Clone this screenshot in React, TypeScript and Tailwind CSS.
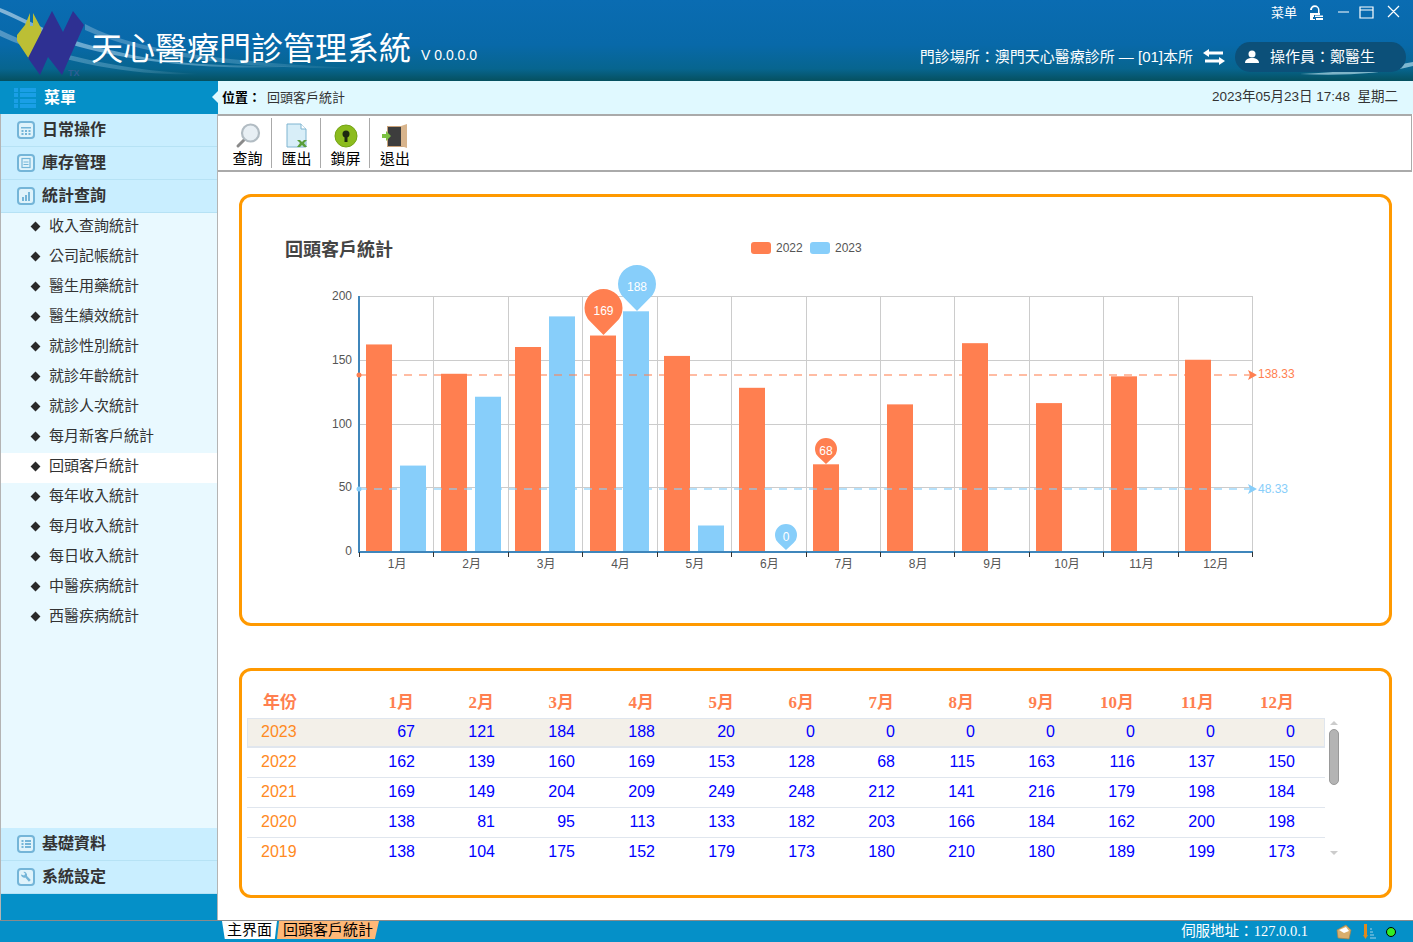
import type { ReactNode } from "react";

const months = ["1月", "2月", "3月", "4月", "5月", "6月", "7月", "8月", "9月", "10月", "11月", "12月"];
const rows: [string, number[]][] = [
  ["2023", [67, 121, 184, 188, 20, 0, 0, 0, 0, 0, 0, 0]],
  ["2022", [162, 139, 160, 169, 153, 128, 68, 115, 163, 116, 137, 150]],
  ["2021", [169, 149, 204, 209, 249, 248, 212, 141, 216, 179, 198, 184]],
  ["2020", [138, 81, 95, 113, 133, 182, 203, 166, 184, 162, 200, 198]],
  ["2019", [138, 104, 175, 152, 179, 173, 180, 210, 180, 189, 199, 173]],
];
const subMenu = ["收入查詢統計", "公司記帳統計", "醫生用藥統計", "醫生績效統計", "就診性別統計", "就診年齡統計", "就診人次統計", "每月新客戶統計", "回頭客戶統計", "每年收入統計", "每月收入統計", "每日收入統計", "中醫疾病統計", "西醫疾病統計"];

const ORANGE = "#ff7f50";
const BLUE = "#87cefa";
const X0 = 359;
const STEP = 74.42;
const Y0 = 551;
const yOf = (v: number) => Y0 - v * 1.275;
const orangeX = [366, 441, 515, 590, 664, 739, 813, 887, 962, 1036, 1111, 1185];
const blueX = [400, 475, 549, 623, 698];

function Pin({ cx, cy, r, tip, color, label }: { cx: number; cy: number; r: number; tip: number; color: string; label: string }) {
  const d = tip - cy;
  const ty = cy + (r * r) / d;
  const tx = r * Math.sqrt(1 - (r * r) / (d * d));
  return (
    <g>
      <path d={`M${cx} ${tip}L${cx - tx} ${ty}A${r} ${r} 0 1 1 ${cx + tx} ${ty}Z`} fill={color} />
      <text x={cx} y={cy + (r > 15 ? 7 : 5.5)} textAnchor="middle" fontSize="12" fill="#fff">{label}</text>
    </g>
  );
}

function Chart() {
  return (
    <svg viewBox="242 197 1145 426" className="block w-[1145px] h-[426px]">
      <text x="285" y="256" fontSize="18" fontWeight="700" fill="#444">回頭客戶統計</text>
      <rect x="751" y="242" width="20" height="12" rx="3" fill={ORANGE} />
      <text x="776" y="252" fontSize="12" fill="#555">2022</text>
      <rect x="810" y="242" width="20" height="12" rx="3" fill={BLUE} />
      <text x="835" y="252" fontSize="12" fill="#555">2023</text>
      {[200, 150, 100, 50].map((v) => (
        <line key={v} x1={X0} x2="1252" y1={Math.round(yOf(v)) + 0.5} y2={Math.round(yOf(v)) + 0.5} stroke="#ccc" />
      ))}
      {months.map((_, i) => (
        <line key={i} x1={Math.round(X0 + STEP * (i + 1)) + 0.5} x2={Math.round(X0 + STEP * (i + 1)) + 0.5} y1="296" y2={Y0} stroke="#ccc" />
      ))}
      {[200, 150, 100, 50, 0].map((v) => (
        <text key={v} x="352" y={yOf(v) + 4} textAnchor="end" fontSize="12" fill="#555">{v}</text>
      ))}
      {months.map((m, i) => {
        const c = X0 + STEP * (i + 0.5);
        return (
          <g key={m}>
            <rect x={orangeX[i]} y={yOf(rows[1][1][i])} width="26" height={rows[1][1][i] * 1.275} fill={ORANGE} />
            {rows[0][1][i] > 0 && <rect x={blueX[i]} y={yOf(rows[0][1][i])} width="26" height={rows[0][1][i] * 1.275} fill={BLUE} />}
            <text x={c + 1} y="568" textAnchor="middle" fontSize="12" fill="#555">{m}</text>
          </g>
        );
      })}
      <line x1={X0} x2={X0} y1="296" y2="553" stroke="#3f86bb" strokeWidth="2" />
      <line x1={X0 - 1} x2="1253" y1="552" y2="552" stroke="#3f86bb" strokeWidth="2" />
      {months.concat("").map((_, i) => (
        <line key={i} x1={Math.round(X0 + STEP * i) + 0.5} x2={Math.round(X0 + STEP * i) + 0.5} y1="552" y2="557" stroke="#333" />
      ))}
      <line x1={X0} x2="1250" y1="375" y2="375" stroke={ORANGE} strokeOpacity="0.7" strokeWidth="1.5" strokeDasharray="8 7" />
      <circle cx={X0} cy="375" r="2.5" fill={ORANGE} />
      <path d="M1248 370l9 5-9 5 2-5z" fill={ORANGE} />
      <text x="1258" y="378" fontSize="12" fill={ORANGE}>138.33</text>
      <line x1={X0} x2="1250" y1="489" y2="489" stroke={BLUE} strokeOpacity="0.8" strokeWidth="1.5" strokeDasharray="8 7" />
      <circle cx={X0} cy="489" r="2.5" fill={BLUE} />
      <path d="M1248 484l9 5-9 5 2-5z" fill={BLUE} />
      <text x="1258" y="493" fontSize="12" fill={BLUE}>48.33</text>
      <Pin cx={603.5} cy={308} r={19} tip={335} color={ORANGE} label="169" />
      <Pin cx={637} cy={284} r={19} tip={311} color={BLUE} label="188" />
      <Pin cx={826} cy={449} r={11} tip={464} color={ORANGE} label="68" />
      <Pin cx={786} cy={535} r={11} tip={550} color={BLUE} label="0" />
    </svg>
  );
}

function Logo() {
  return (
    <svg width="90" height="80" viewBox="0 0 90 80" className="absolute left-0 top-0">
      <path d="M17 35l8-10 5-12v13h3V13l8 15 1 6-13 25-12-18z" fill="#bcbf35" />
      <path d="M28 58L52 11l11 21 10-21 11 14-22 50-14-18-8 18z" fill="#2e3092" />
      <text x="68" y="76" fontSize="9" fontWeight="700" fill="#2e5f96">TX</text>
    </svg>
  );
}

function Streaks() {
  return (
    <svg width="1413" height="81" viewBox="0 0 1413 81" className="absolute inset-0">
      <defs>
        <linearGradient id="st" x1="0" x2="1" y1="0" y2="0">
          <stop offset="0" stopColor="#fff" stopOpacity="0.5" />
          <stop offset="0.6" stopColor="#bfe9ff" stopOpacity="0.4" />
          <stop offset="1" stopColor="#fff" stopOpacity="0" />
        </linearGradient>
      </defs>
      <path d="M0 8C30 20 60 40 110 50C160 62 190 66 300 66C210 72 120 60 70 44C40 32 20 20 0 12Z" fill="url(#st)" />
      <path d="M0 30C40 50 110 70 200 74C150 76 70 68 0 36Z" fill="url(#st)" opacity="0.6" />
      <path d="M85 24C130 48 210 62 360 68C250 70 150 58 85 30Z" fill="url(#st)" opacity="0.5" />
      <path d="M1300 74C1340 72 1380 68 1413 62V66C1380 74 1340 76 1300 74Z" fill="#cfeefa" opacity="0.6" />
    </svg>
  );
}

function SideIcon({ children }: { children: ReactNode }) {
  return (
    <svg width="18" height="18" viewBox="0 0 18 18" className="shrink-0">
      <rect x="1" y="1" width="16" height="16" rx="3" fill="#dff3fb" stroke="#74b5d8" strokeWidth="2" />
      {children}
    </svg>
  );
}

function Section({ icon, label, border = true }: { icon: ReactNode; label: string; border?: boolean }) {
  return (
    <div className={`h-[33px] flex items-center pl-4 gap-[7px] bg-[#c9eeff] text-[16px] font-bold text-[#333] ${border ? "border-b border-[#b6e2f5]" : ""}`}>
      <SideIcon>{icon}</SideIcon>
      <span>{label}</span>
    </div>
  );
}

function ToolButton({ icon, label, last }: { icon: ReactNode; label: string; last?: boolean }) {
  return (
    <div className={`w-[49px] h-[50px] flex flex-col items-center pl-px ${last ? "" : "border-r border-[#aaa]"}`}>
      <div className="h-[32px] flex items-center pt-[3px]">{icon}</div>
      <span className="text-[15px] leading-[17px] text-black">{label}</span>
    </div>
  );
}

function Sidebar() {
  return (
    <aside className="w-[218px] flex flex-col border-l border-r border-[#b4b4b4] bg-[#e9f9ff]">
      <Section label="日常操作" icon={<g fill="#74b5d8"><rect x="4" y="6" width="10" height="1.500" /><rect x="4.500" y="9" width="2" height="2" /><rect x="8" y="9" width="2" height="2" /><rect x="11.500" y="9" width="2" height="2" /><rect x="4.500" y="12" width="2" height="2" /><rect x="8" y="12" width="2" height="2" /><rect x="11.500" y="12" width="2" height="2" /></g>} />
      <Section label="庫存管理" icon={<g fill="none" stroke="#74b5d8" strokeWidth="1.200"><rect x="5" y="4.500" width="8" height="9" /><path d="M6.500 8h5M6.500 10.500h5" /></g>} />
      <Section label="統計查詢" icon={<g fill="#74b5d8"><rect x="5" y="10" width="2" height="4" /><rect x="8" y="8" width="2" height="6" /><rect x="11" y="5" width="2" height="9" /></g>} />
      <div className="flex-1">
        {subMenu.map((s) => (
          <div key={s} className={`h-[30px] flex items-center pl-[29px] gap-[9px] pb-[3px] text-[15px] text-[#333] ${s === "回頭客戶統計" ? "bg-white" : ""}`}>
            <span className="w-[10px] h-[10px] flex items-center justify-center">
              <span className="block w-[7px] h-[7px] rotate-45 bg-[#2a2a2a]" />
            </span>
            <span>{s}</span>
          </div>
        ))}
      </div>
      <Section label="基礎資料" icon={<g fill="#74b5d8"><rect x="4.500" y="5" width="2" height="2" /><rect x="8" y="5" width="6" height="2" /><rect x="4.500" y="8" width="2" height="2" /><rect x="8" y="8" width="6" height="2" /><rect x="4.500" y="11" width="2" height="2" /><rect x="8" y="11" width="6" height="2" /></g>} />
      <Section label="系統設定" icon={<path d="M4 6.500a3.200 3.200 0 0 0 4.300 3l3.600 4.300 1.900-1.700-3.800-4.200a3.200 3.200 0 0 0-3.600-4l1.900 1.900-1.200 1.700z" fill="#74b5d8" />} />
      <div className="h-[27px] bg-[#0590c8]" />
    </aside>
  );
}

function DataTable() {
  return (
    <div className="w-[1078px]">
      <div className="grid grid-cols-[88px_repeat(12,80px)] h-[30px] items-center text-[17px] font-bold text-[#ff7f50] [font-family:Liberation_Serif,Noto_Sans_CJK_TC,serif]">
        <span className="pl-4">年份</span>
        {months.map((m) => (
          <span key={m} className="text-right pr-[1px]">{m}</span>
        ))}
      </div>
      {rows.map(([year, vals], i) => (
        <div key={year} className={`grid grid-cols-[88px_repeat(12,80px)] h-[30px] items-center pb-[2px] text-[16px] text-[#0000ff] ${i === 0 ? "bg-[#f3f0e9] shadow-[inset_0_0_0_1px_#e0e6ee]" : ""} ${i < 4 ? "border-b border-[#e0e6ee]" : ""}`}>
          <span className="pl-[14px] text-[#ff8a1f]">{year}</span>
          {vals.map((v, j) => (
            <span key={j} className="text-right">{v}</span>
          ))}
        </div>
      ))}
    </div>
  );
}

function FakeScrollbar() {
  return (
    <div className="w-[10px] ml-[4px] flex flex-col items-center pt-[33px]">
      <span className="w-0 h-0 border-x-[4px] border-x-transparent border-b-[4px] border-b-[#ccc]" />
      <span className="w-[10px] h-[56px] mt-[4px] rounded-[5px] bg-[#b4b4b4] border border-[#999]" />
      <span className="w-0 h-0 mt-[66px] border-x-[4px] border-x-transparent border-t-[4px] border-t-[#ccc]" />
    </div>
  );
}

export default function App() {
  return (
    <div className="w-[1413px] h-[942px] overflow-hidden flex flex-col bg-white [font-family:Liberation_Sans,Noto_Sans_CJK_TC,sans-serif]">
      <header className="relative h-[81px] shrink-0 bg-[linear-gradient(180deg,#0a6cb2_0%,#0869a9_55%,#07658f_85%,#05505f_100%)] text-white">
        <Streaks />
        <Logo />
        <div className="relative h-full flex justify-between">
          <div className="flex items-baseline pl-[91px] pt-[28px]">
            <h1 className="text-[32px] leading-[42px] font-normal">天心醫療門診管理系統</h1>
            <span className="ml-[10px] text-[14px]">V 0.0.0.0</span>
          </div>
          <div className="flex flex-col items-end pr-[7px]">
            <div className="h-[24px] flex items-center gap-[12px] pr-[4px] pt-[2px]">
              <span className="text-[13px]">菜单</span>
              <svg width="15" height="16" viewBox="0 0 15 16" fill="#fff"><path d="M1 8h8V5a3 3 0 0 0-6 0H1a4.700 4.700 0 0 1 9.500 0v3H11v2H5v2h-1v2h2v1H1z" /><path d="M6 10.500h8v1.500H6zM7 13h7v2H7z" /></svg>
              <svg width="66" height="16" viewBox="0 0 66 16" fill="none" stroke="#fff" strokeWidth="1.200"><path d="M2 7h11M24 2h13v11H24zM24 5h13M52 1l11 11M63 1L52 12" /></svg>
            </div>
            <div className="mt-[18px] flex items-center">
              <span className="text-[15px]">門診場所：澳門天心醫療診所 — [01]本所</span>
              <svg width="24" height="18" viewBox="0 0 24 18" fill="#fff" className="ml-[9px]"><path d="M7 1L1 5l6 4V6.500h14v-3H7zM17 9l6 4-6 4v-2.500H3v-3h14z" /></svg>
              <div className="ml-[9px] w-[171px] h-[30px] rounded-[15px] bg-[#0c5079] flex items-center pl-[10px] text-[15px]">
                <svg width="14" height="14" viewBox="0 0 14 14" fill="#fff"><circle cx="7" cy="4" r="3.500" /><path d="M0 13c0-3.500 3-5 7-5s7 1.500 7 5z" /></svg>
                <span className="ml-[11px]">操作員：鄭醫生</span>
              </div>
            </div>
          </div>
        </div>
      </header>

      <div className="h-[33px] shrink-0 flex">
        <div className="relative w-[218px] bg-[#0590c8] flex items-center pl-[14px] gap-[8px] text-white text-[16px] font-bold">
          <svg width="22" height="22" viewBox="0 0 22 22" fill="#1a9fe6">
            <rect x="0" y="1" width="4" height="4" /><rect x="6" y="1" width="16" height="4" />
            <rect x="0" y="6" width="4" height="4" /><rect x="6" y="6" width="16" height="4" />
            <rect x="0" y="12" width="4" height="4" /><rect x="6" y="12" width="16" height="4" />
            <rect x="0" y="17" width="4" height="4" /><rect x="6" y="17" width="16" height="4" />
          </svg>
          <span>菜單</span>
          <span className="absolute right-0 top-[10px] w-0 h-0 border-y-[6px] border-y-transparent border-r-[6px] border-r-[#e0f9ff]" />
        </div>
        <div className="flex-1 bg-[#e0f9ff] flex items-center justify-between pl-[4px] pr-[15px] text-[13px] text-[#333]">
          <div><b className="text-black">位置：</b><span className="ml-[6px]">回頭客戶統計</span></div>
          <span className="text-[13.500px]">2023年05月23日 17:48&nbsp; 星期二</span>
        </div>
      </div>

      <div className="flex-1 min-h-0 flex">
        <Sidebar />
        <main className="flex-1 flex flex-col">
          <div className="h-[58px] shrink-0 mr-px border-t-2 border-b-2 border-r border-[#aaa] flex items-center pl-[5px]">
            <ToolButton label="查詢" icon={<svg width="26" height="26" viewBox="0 0 26 26"><line x1="3" y1="23" x2="11" y2="15" stroke="#8a8a8a" strokeWidth="3" strokeLinecap="round" /><circle cx="15.500" cy="10" r="8.500" fill="#e8eff4" stroke="#b2bcc3" strokeWidth="2.200" /></svg>} />
            <ToolButton label="匯出" icon={<svg width="24" height="26" viewBox="0 0 24 26"><path d="M2 1h14l5 5v18H2z" fill="#d8eef8" stroke="#7fb4d0" /><path d="M16 1v5h5" fill="#fff" stroke="#7fb4d0" /><path d="M12 17l3 3-3 4h3l2-2 2 2h3l-3-4 3-3h-3l-2 2-2-2z" fill="#5a9e3a" /></svg>} />
            <ToolButton label="鎖屏" icon={<svg width="24" height="24" viewBox="0 0 24 24"><circle cx="12" cy="12" r="11" fill="#8cbc1e" stroke="#73a314" /><circle cx="12" cy="10" r="3.500" fill="#1d2a10" /><rect x="10.500" y="10" width="3" height="8" fill="#1d2a10" /></svg>} />
            <ToolButton last label="退出" icon={<svg width="26" height="26" viewBox="0 0 26 26"><rect x="5" y="3" width="19" height="21" fill="#c9a27a" /><rect x="6" y="4" width="13" height="19" fill="#3d3d3d" /><path d="M19 3l6-2v24l-6-2z" fill="#d8b48c" /><path d="M0 11h4V8l5 5-5 5v-3H0z" fill="#7cc142" /></svg>} />
          </div>
          <div className="flex-1 pl-[21px] pr-[21px] pt-[22px]">
            <section className="h-[432px] border-[3px] border-[#ff9900] rounded-[12px]">
              <Chart />
            </section>
            <section className="h-[230px] mt-[42px] border-[3px] border-[#ff9900] rounded-[12px] pl-[5px] pt-[17px] flex">
              <DataTable />
              <FakeScrollbar />
            </section>
          </div>
        </main>
      </div>

      <footer className="relative h-[22px] shrink-0 -mt-px border-t border-[#8a8a8a] bg-[#0590c8] flex items-center justify-between pl-[222px] pr-[17px] text-white">
        <div className="flex items-center text-[15px] text-black self-start">
          <span className="w-[55px] h-[18px] leading-[17px] bg-white text-center [clip-path:polygon(0_0,100%_0,96%_100%,5%_100%)]">主界面</span>
          <span className="w-[102px] h-[18px] leading-[17px] bg-[#ffb877] text-center [clip-path:polygon(2%_0,100%_0,96%_100%,0_100%)]">回頭客戶統計</span>
        </div>
        <div className="flex items-center">
          <span className="text-[14.500px]">伺服地址：<span className="[font-family:Liberation_Serif,serif]">127.0.0.1</span></span>
          <svg width="16" height="16" viewBox="0 0 16 16" className="ml-[28px]"><path d="M1 6l9-5 5 5-2 9-11-1z" fill="#d9ae6c" stroke="#a98246" strokeWidth="0.700" /><path d="M3 6l7-3 3 4-5 2z" fill="#fff" /></svg>
          <svg width="14" height="16" viewBox="0 0 14 16" className="ml-[11px]"><rect x="1" y="0" width="3" height="12" fill="#e08a1e" /><path d="M0 11h5l-2.500 4z" fill="#e08a1e" /><path d="M7 14h6M7 11h4M7 8h3M7 5h2" stroke="#9fd0e6" /></svg>
          <span className="ml-[9px] w-[10px] h-[10px] rounded-full bg-[#33ee22] border border-black" />
        </div>
      </footer>
    </div>
  );
}
